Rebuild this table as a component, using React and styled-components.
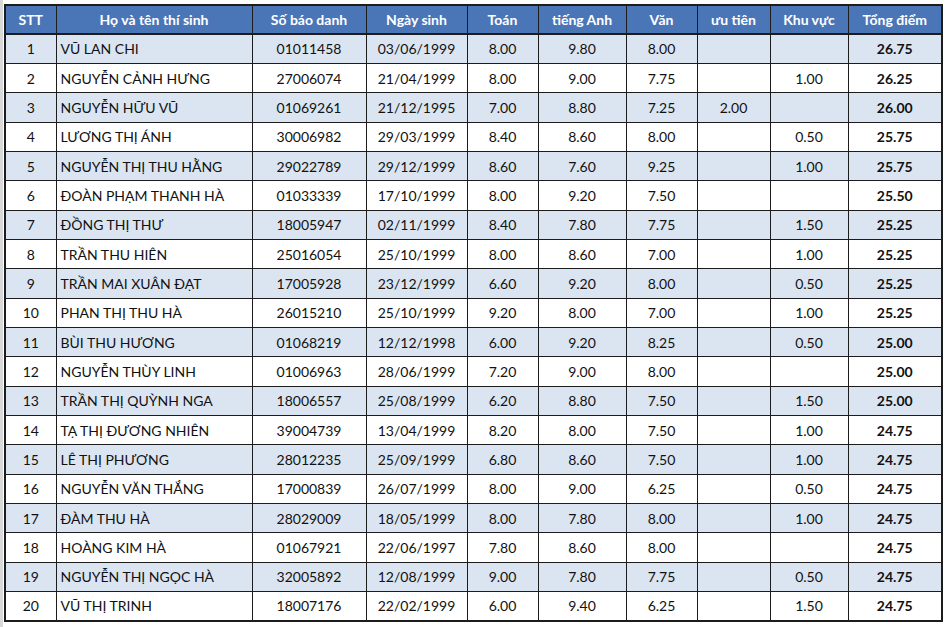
import React from 'react'
import styled, { createGlobalStyle } from 'styled-components'

const columns = [
  { title: 'STT', width: 51 },
  { title: 'Họ và tên thí sinh', width: 196 },
  { title: 'Số báo danh', width: 114 },
  { title: 'Ngày sinh', width: 101 },
  { title: 'Toán', width: 71 },
  { title: 'tiếng Anh', width: 88 },
  { title: 'Văn', width: 71 },
  { title: 'ưu tiên', width: 73 },
  { title: 'Khu vực', width: 78 },
  { title: 'Tổng điểm', width: 94 }
]

const students = [
  ['VŨ LAN CHI', '01011458', '03/06/1999', '8.00', '9.80', '8.00', '', '', '26.75'],
  ['NGUYỄN CẢNH HƯNG', '27006074', '21/04/1999', '8.00', '9.00', '7.75', '', '1.00', '26.25'],
  ['NGUYỄN HỮU VŨ', '01069261', '21/12/1995', '7.00', '8.80', '7.25', '2.00', '', '26.00'],
  ['LƯƠNG THỊ ÁNH', '30006982', '29/03/1999', '8.40', '8.60', '8.00', '', '0.50', '25.75'],
  ['NGUYỄN THỊ THU HẰNG', '29022789', '29/12/1999', '8.60', '7.60', '9.25', '', '1.00', '25.75'],
  ['ĐOÀN PHẠM THANH HÀ', '01033339', '17/10/1999', '8.00', '9.20', '7.50', '', '', '25.50'],
  ['ĐỒNG THỊ THƯ', '18005947', '02/11/1999', '8.40', '7.80', '7.75', '', '1.50', '25.25'],
  ['TRẦN THU HIÊN', '25016054', '25/10/1999', '8.00', '8.60', '7.00', '', '1.00', '25.25'],
  ['TRẦN MAI XUÂN ĐẠT', '17005928', '23/12/1999', '6.60', '9.20', '8.00', '', '0.50', '25.25'],
  ['PHAN THỊ THU HÀ', '26015210', '25/10/1999', '9.20', '8.00', '7.00', '', '1.00', '25.25'],
  ['BÙI THU HƯƠNG', '01068219', '12/12/1998', '6.00', '9.20', '8.25', '', '0.50', '25.00'],
  ['NGUYỄN THÙY LINH', '01006963', '28/06/1999', '7.20', '9.00', '8.00', '', '', '25.00'],
  ['TRẦN THỊ QUỲNH NGA', '18006557', '25/08/1999', '6.20', '8.80', '7.50', '', '1.50', '25.00'],
  ['TẠ THỊ ĐƯƠNG NHIÊN', '39004739', '13/04/1999', '8.20', '8.00', '7.50', '', '1.00', '24.75'],
  ['LÊ THỊ PHƯƠNG', '28012235', '25/09/1999', '6.80', '8.60', '7.50', '', '1.00', '24.75'],
  ['NGUYỄN VĂN THẮNG', '17000839', '26/07/1999', '8.00', '9.00', '6.25', '', '0.50', '24.75'],
  ['ĐÀM THU HÀ', '28029009', '18/05/1999', '8.00', '7.80', '8.00', '', '1.00', '24.75'],
  ['HOÀNG KIM HÀ', '01067921', '22/06/1997', '7.80', '8.60', '8.00', '', '', '24.75'],
  ['NGUYỄN THỊ NGỌC HÀ', '32005892', '12/08/1999', '9.00', '7.80', '7.75', '', '0.50', '24.75'],
  ['VŨ THỊ TRINH', '18007176', '22/02/1999', '6.00', '9.40', '6.25', '', '1.50', '24.75']
]

export default function App () {
  return (
    <Page>
      <GlobalStyle />
      <Sheet>
        <colgroup>
          {columns.map(c => <col key={c.title} style={{ width: c.width }} />)}
        </colgroup>
        <thead>
          <tr>
            {columns.map(c => <HeadCell key={c.title}>{c.title}</HeadCell>)}
          </tr>
        </thead>
        <tbody>
          {students.map((s, i) => (
            <Row key={s[1]} $alt={i % 2 === 0}>
              <Cell>{i + 1}</Cell>
              <Cell $left>{s[0]}</Cell>
              {s.slice(1, 8).map((v, j) => <Cell key={j}>{v}</Cell>)}
              <Cell $bold>{s[8]}</Cell>
            </Row>
          ))}
        </tbody>
      </Sheet>
    </Page>
  )
}

const GlobalStyle = createGlobalStyle`
  body {
    margin: 0;
    background: #fff;
    font-family: Lato, "Noto Sans", sans-serif;
  }
`
const Page = styled.div`
  width: 949px;
  height: 627px;
  padding: 4px 0 0 4px;
  box-sizing: border-box;
  border-left: 3px solid #d8d8d8;
  padding-left: 1px;
`
const Sheet = styled.table`
  border-collapse: collapse;
  table-layout: fixed;
  width: 938px;
  border: 2px solid #1c1c1c;
`
const HeadCell = styled.th`
  height: 27px;
  padding: 0;
  background: #4a76b8;
  color: #fff;
  font-size: 14px;
  font-weight: 700;
  text-align: center;
  border: 1px solid #1c1c1c;
  border-bottom-width: 2px;
`
const Row = styled.tr`
  height: 29.35px;
  background: ${p => (p.$alt ? '#dbe5f1' : '#fff')};
`
const Cell = styled.td`
  padding: 0 0 0 ${p => (p.$left ? '4px' : '0')};
  font-size: 14px;
  color: #111;
  font-weight: ${p => (p.$bold ? 700 : 400)};
  text-align: ${p => (p.$left ? 'left' : 'center')};
  border: 1px solid #1c1c1c;
  white-space: nowrap;
  overflow: hidden;
`
